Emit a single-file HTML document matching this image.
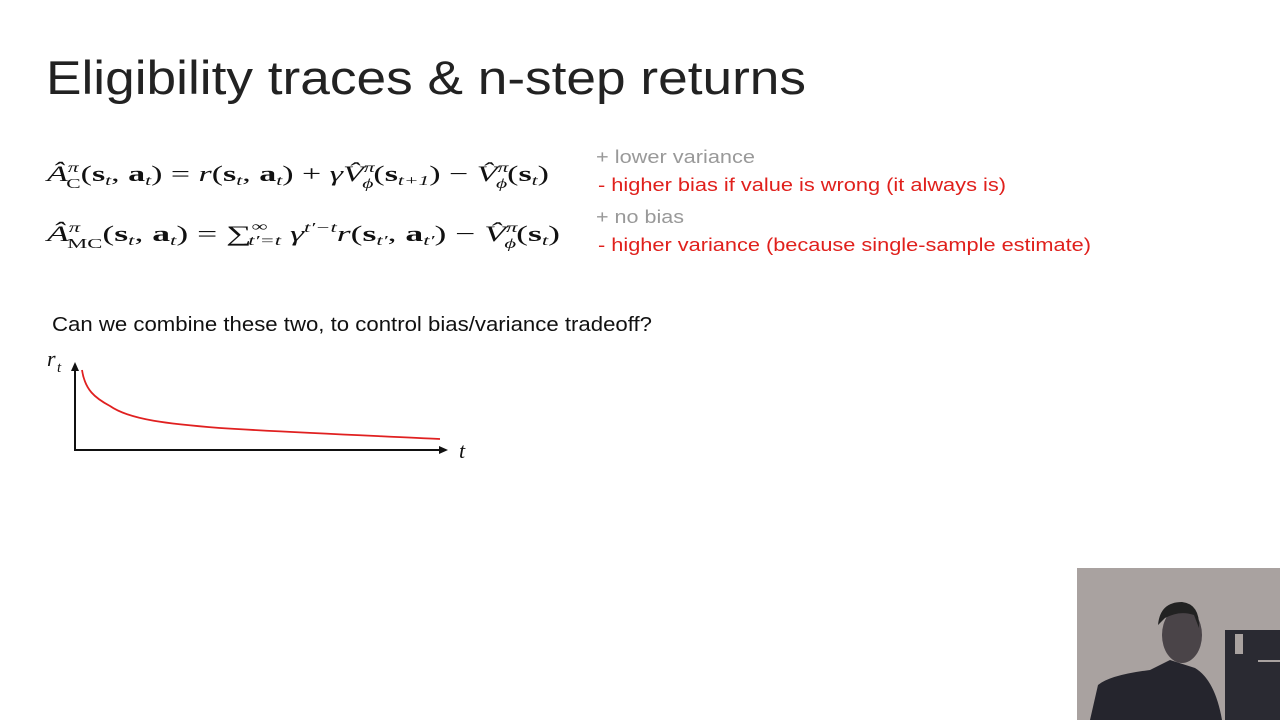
<!DOCTYPE html>
<html><head><style>html,body{margin:0;padding:0;background:#fff;width:1280px;height:720px;overflow:hidden}</style></head>
<body>
<svg width="1280" height="720" viewBox="0 0 1280 720" xmlns="http://www.w3.org/2000/svg">
<rect width="1280" height="720" fill="#fff"/>
<text x="46" y="94" font-family="Liberation Sans, sans-serif" font-size="47" fill="#222" textLength="760" lengthAdjust="spacingAndGlyphs">Eligibility traces &amp; n-step returns</text>

<g font-family="Liberation Serif, serif" font-size="22" fill="#111">
<text x="47" y="181" textLength="502" lengthAdjust="spacingAndGlyphs"><tspan font-style="italic">Â</tspan><tspan font-size="14" dy="-9" font-style="italic">π</tspan><tspan font-size="14" dx="-8" dy="16">C</tspan><tspan dy="-7">(</tspan><tspan font-weight="bold">s</tspan><tspan font-size="14" dy="4" font-style="italic">t</tspan><tspan dy="-4">, </tspan><tspan font-weight="bold">a</tspan><tspan font-size="14" dy="4" font-style="italic">t</tspan><tspan dy="-4">) = </tspan><tspan font-style="italic">r</tspan>(<tspan font-weight="bold">s</tspan><tspan font-size="14" dy="4" font-style="italic">t</tspan><tspan dy="-4">, </tspan><tspan font-weight="bold">a</tspan><tspan font-size="14" dy="4" font-style="italic">t</tspan><tspan dy="-4">) + </tspan><tspan font-style="italic">γV̂</tspan><tspan font-size="14" dy="-9" font-style="italic">π</tspan><tspan font-size="14" dx="-8" dy="16" font-style="italic">ϕ</tspan><tspan dy="-7">(</tspan><tspan font-weight="bold">s</tspan><tspan font-size="14" dy="4" font-style="italic">t+1</tspan><tspan dy="-4">) − </tspan><tspan font-style="italic">V̂</tspan><tspan font-size="14" dy="-9" font-style="italic">π</tspan><tspan font-size="14" dx="-8" dy="16" font-style="italic">ϕ</tspan><tspan dy="-7">(</tspan><tspan font-weight="bold">s</tspan><tspan font-size="14" dy="4" font-style="italic">t</tspan><tspan dy="-4">)</tspan></text>
<text x="47" y="241" textLength="513" lengthAdjust="spacingAndGlyphs"><tspan font-style="italic">Â</tspan><tspan font-size="14" dy="-9" font-style="italic">π</tspan><tspan font-size="14" dx="-8" dy="16">MC</tspan><tspan dy="-7">(</tspan><tspan font-weight="bold">s</tspan><tspan font-size="14" dy="4" font-style="italic">t</tspan><tspan dy="-4">, </tspan><tspan font-weight="bold">a</tspan><tspan font-size="14" dy="4" font-style="italic">t</tspan><tspan dy="-4">) = ∑</tspan><tspan font-size="14" dy="-10">∞</tspan><tspan font-size="14" dx="-12" dy="14" font-style="italic">t′=t</tspan><tspan dy="-4" font-style="italic"> γ</tspan><tspan font-size="14" dy="-9" font-style="italic">t′−t</tspan><tspan dy="9" font-style="italic">r</tspan>(<tspan font-weight="bold">s</tspan><tspan font-size="14" dy="4" font-style="italic">t′</tspan><tspan dy="-4">, </tspan><tspan font-weight="bold">a</tspan><tspan font-size="14" dy="4" font-style="italic">t′</tspan><tspan dy="-4">) − </tspan><tspan font-style="italic">V̂</tspan><tspan font-size="14" dy="-9" font-style="italic">π</tspan><tspan font-size="14" dx="-8" dy="16" font-style="italic">ϕ</tspan><tspan dy="-7">(</tspan><tspan font-weight="bold">s</tspan><tspan font-size="14" dy="4" font-style="italic">t</tspan><tspan dy="-4">)</tspan></text>
</g>

<g font-family="Liberation Sans, sans-serif" font-size="18">
<text x="596" y="163" fill="#999" textLength="159" lengthAdjust="spacingAndGlyphs">+ lower variance</text>
<text x="598" y="191" fill="#e0201c" textLength="408" lengthAdjust="spacingAndGlyphs">- higher bias if value is wrong (it always is)</text>
<text x="596" y="223" fill="#999" textLength="88" lengthAdjust="spacingAndGlyphs">+ no bias</text>
<text x="598" y="251" fill="#e0201c" textLength="493" lengthAdjust="spacingAndGlyphs">- higher variance (because single-sample estimate)</text>
<text x="52" y="331" fill="#111" font-size="20" textLength="600" lengthAdjust="spacingAndGlyphs">Can we combine these two, to control bias/variance tradeoff?</text>
</g>

<g stroke="#111" stroke-width="2" fill="none">
<line x1="75" y1="451" x2="75" y2="368"/>
<line x1="74" y1="450" x2="442" y2="450"/>
</g>
<polygon points="75,362 71,371 79,371" fill="#111"/>
<polygon points="448,450 439,446 439,454" fill="#111"/>
<path d="M82,370 C85,390 95,398 110,406 C130,420 170,424 220,428 C300,433 380,436 440,439" stroke="#e02020" stroke-width="1.8" fill="none"/>
<text x="47" y="366" font-family="Liberation Serif, serif" font-style="italic" font-size="22" fill="#111">r</text>
<text x="57" y="372" font-family="Liberation Serif, serif" font-style="italic" font-size="15" fill="#111">t</text>
<text x="459" y="458" font-family="Liberation Serif, serif" font-style="italic" font-size="22" fill="#111">t</text>

<g>
<rect x="1077" y="568" width="203" height="152" fill="#a9a2a0"/>
<rect x="1225" y="630" width="55" height="90" fill="#2a2a32"/>
<rect x="1235" y="634" width="8" height="20" fill="#a9a2a0"/>
<rect x="1258" y="660" width="22" height="2" fill="#a9a2a0"/>
<path d="M1090,720 L1098,685 Q1110,675 1150,670 L1170,660 L1195,668 Q1215,680 1222,720 Z" fill="#25252d"/>
<ellipse cx="1182" cy="635" rx="20" ry="28" fill="#4a4448"/>
<path d="M1158,625 Q1160,602 1182,602 Q1200,604 1199,628 L1194,615 Q1180,610 1165,618 Z" fill="#222"/>
</g>
</svg>
</body></html>
